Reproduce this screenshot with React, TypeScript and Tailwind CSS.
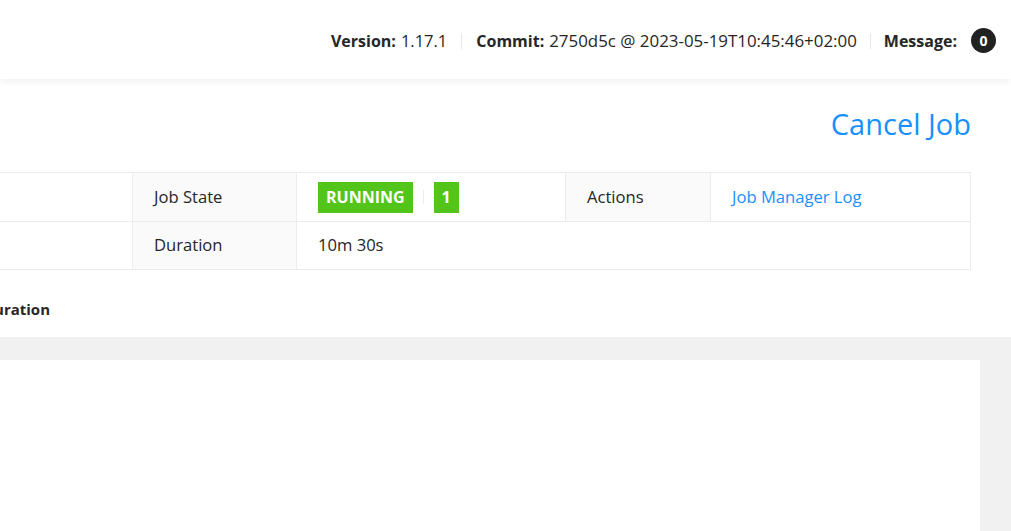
export default function App() {
  return (
    <div className="min-h-screen bg-[#f1f1f1] font-['Open_Sans',sans-serif] text-[16px] text-[#262626]">
      {/* top bar */}
      <header className="relative z-10 flex h-[79px] items-center justify-end bg-white pr-[15px] pt-[3px] shadow-[0_2px_8px_rgba(0,0,0,0.07)]">
        <div className="flex items-center whitespace-nowrap">
          <span className="font-bold">Version:</span>
          <span className="ml-[5px] text-[16.5px]">1.17.1</span>
          <span className="mx-[14px] h-[16px] w-px bg-[#e8e8e8]" />
          <span className="font-bold">Commit:</span>
          <span className="ml-[5px] text-[16.9px]">2750d5c @ 2023-05-19T10:45:46+02:00</span>
          <span className="mx-[13px] h-[16px] w-px bg-[#e8e8e8]" />
          <span className="font-bold">Message:</span>
          <span className="ml-[14px] flex h-[25px] w-[25px] items-center justify-center rounded-full bg-[#222] text-[14px] font-bold text-white">
            0
          </span>
        </div>
      </header>

      {/* job summary */}
      <section className="bg-white pr-[40px] text-[16.6px]">
        <div className="flex justify-end pt-[25px]">
          <a className="text-[29px] leading-[40px] text-[#1890ff]">Cancel Job</a>
        </div>

        <div className="mt-[28px] border-y border-r border-[#ececec]">
          <div className="flex h-[49px] border-b border-[#ececec]">
            <div className="w-[133px] border-r border-[#ececec]" />
            <div className="flex w-[164px] items-center border-r border-[#ececec] bg-[#fafafa] px-[21px]">Job State</div>
            <div className="flex w-[269px] items-center border-r border-[#ececec] px-[21px]">
              <span className="flex h-[31px] items-center bg-[#52c41a] px-[8px] text-[16px] font-bold text-white">RUNNING</span>
              <span className="mx-[10px] h-[14px] w-px bg-[#ececec]" />
              <span className="flex h-[31px] items-center bg-[#52c41a] px-[8px] text-[16px] font-bold text-white">1</span>
            </div>
            <div className="flex w-[145px] items-center border-r border-[#ececec] bg-[#fafafa] px-[21px]">Actions</div>
            <div className="flex flex-1 items-center px-[21px]">
              <a className="text-[#1890ff]">Job Manager Log</a>
            </div>
          </div>
          <div className="flex h-[47px]">
            <div className="w-[133px] border-r border-[#ececec]" />
            <div className="flex w-[164px] items-center border-r border-[#ececec] bg-[#fafafa] px-[21px]">Duration</div>
            <div className="flex flex-1 items-center px-[21px]">10m 30s</div>
          </div>
        </div>

        {/* tabs, scrolled off to the left */}
        <div className="flex h-[67px] items-center pt-[12px]">
          <div className="flex w-[50px] justify-end overflow-hidden whitespace-nowrap text-[15px] font-bold">Configuration</div>
        </div>
      </section>

      {/* content area */}
      <div className="pr-[31px] pt-[23px]">
        <div className="h-[171px] bg-white" />
      </div>
    </div>
  );
}
